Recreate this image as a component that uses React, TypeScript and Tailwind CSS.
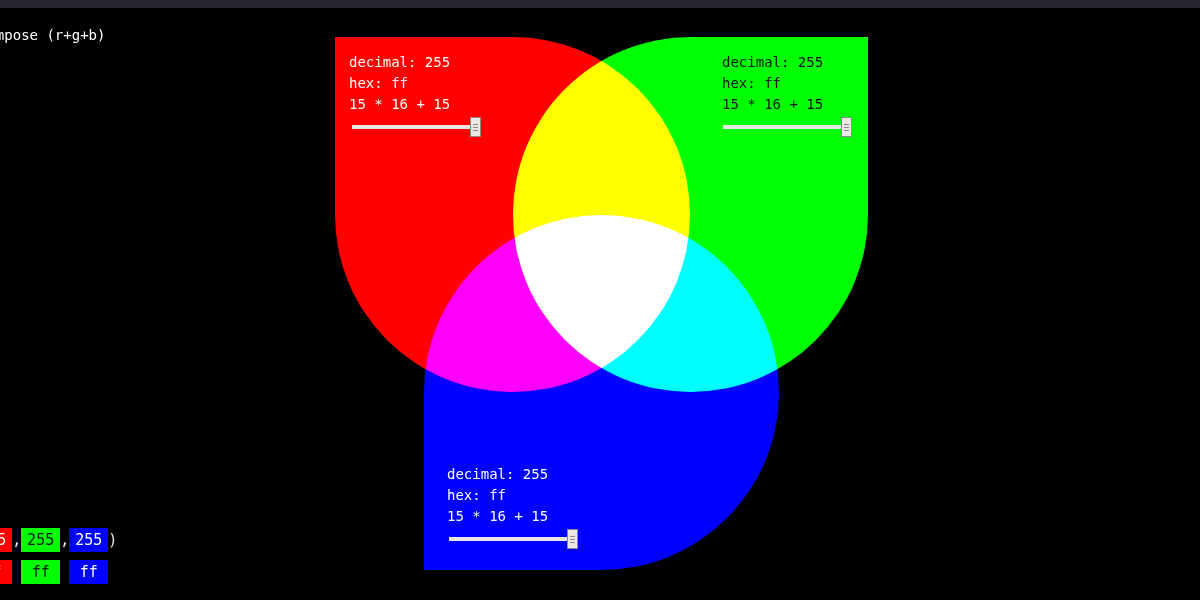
import React from "react";

const mono = "font-['DejaVu_Sans_Mono','Liberation_Mono',monospace]";

// range input look-alike, display only
const Slider = ({ className = "" }: { className?: string }) => (
  <div className={`flex h-5 w-[129px] items-center ${className}`}>
    <div className="h-1 w-[118px] bg-[#e6e6e6]" />
    <div className="flex h-5 w-[11px] flex-col items-center justify-center gap-[2px] border border-[#8a8a8a] bg-[#ebe8e5]">
      <div className="h-px w-[5px] bg-[#8a8a8a]" />
      <div className="h-px w-[5px] bg-[#8a8a8a]" />
      <div className="h-px w-[5px] bg-[#8a8a8a]" />
    </div>
  </div>
);

const Readout = () => (
  <>
    <p>decimal: 255</p>
    <p>hex: ff</p>
    <p>15 * 16 + 15</p>
  </>
);

const App = () => {
  return (
    <div className={`flex h-screen w-full flex-col overflow-hidden bg-black text-[14px] leading-[21px] text-white ${mono}`}>
      <div className="h-2 shrink-0 bg-[#26262e]" />

      <div className="grid flex-1 grid-cols-[335px_533px_1fr]">
        {/* left column, scrolled partly off-screen */}
        <div className="-ml-[63px] flex h-full flex-col justify-between pb-4 pt-[17px]">
          <p className="pl-[42px]">compose (r+g+b)</p>

          <div className="flex flex-col gap-2 text-[15px] leading-6">
            <div className="flex h-6 items-center">
              <span>rgb(</span>
              <span className="w-[39px] bg-[#ff0000] text-center text-white">255</span>
              <span>,</span>
              <span className="w-[39px] bg-[#00ff00] text-center text-[#111]">255</span>
              <span>,</span>
              <span className="w-[39px] bg-[#0000ff] text-center text-white">255</span>
              <span className="text-[#e5e5e5]">)</span>
            </div>
            <div className="flex h-6 items-center">
              <span className="invisible">rgb(</span>
              <span className="w-[39px] bg-[#ff0000] text-center text-white">ff</span>
              <span className="invisible">,</span>
              <span className="w-[39px] bg-[#00ff00] text-center text-[#111]">ff</span>
              <span className="invisible">,</span>
              <span className="w-[39px] bg-[#0000ff] text-center text-white">ff</span>
            </div>
          </div>
        </div>

        {/* venn canvas */}
        <div className="relative mt-[29px] h-[533px] w-[533px]">
          <div className="absolute left-0 top-0 size-[355px] rounded-tr-[50%] rounded-br-[50%] rounded-bl-[50%] bg-[#ff0000] pl-[14px] pt-[15px] mix-blend-screen">
            <Readout />
            <Slider className="ml-[3px] mt-[2px]" />
          </div>

          <div className="absolute left-[178px] top-0 flex size-[355px] flex-col items-end rounded-tl-[50%] rounded-br-[50%] rounded-bl-[50%] bg-[#00ff00] pr-[16px] pt-[15px] text-[#111] mix-blend-screen">
            <div className="w-[130px]">
              <Readout />
              <Slider className="ml-[1px] mt-[2px]" />
            </div>
          </div>

          <div className="absolute left-[89px] top-[178px] flex size-[355px] flex-col justify-end rounded-tl-[50%] rounded-tr-[50%] rounded-br-[50%] bg-[#0000ff] pb-[21px] pl-[23px] mix-blend-screen">
            <Readout />
            <Slider className="ml-[2px] mt-[2px]" />
          </div>
        </div>

        <div />
      </div>
    </div>
  );
};

export default App;
